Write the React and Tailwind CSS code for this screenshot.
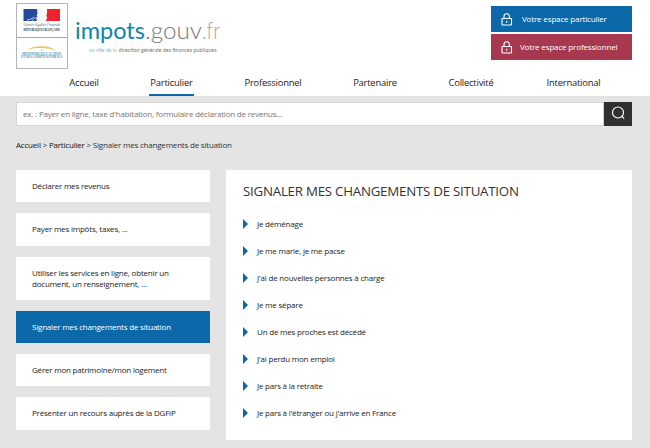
const nav = [
  { label: 'Accueil', place: 'ml-[69px] w-[30px]' },
  { label: 'Particulier', place: 'ml-[50px] w-[45px]', active: true },
  { label: 'Professionnel', place: 'ml-[50px] w-[58px]' },
  { label: 'Partenaire', place: 'ml-[51px] w-[44px]' },
  { label: 'Collectivité', place: 'ml-[51px] w-[46px]' },
  { label: 'International', place: 'ml-[52px] w-[55px]' },
];

const sections = [
  { label: 'Déclarer mes revenus', size: 'h-[32px]' },
  { label: 'Payer mes impôts, taxes, ...', size: 'h-[33px]' },
  { label: 'Utiliser les services en ligne, obtenir un document, un renseignement, ...', size: 'h-[43px]' },
  { label: 'Signaler mes changements de situation', size: 'h-[32px]', active: true },
  { label: 'Gérer mon patrimoine/mon logement', size: 'h-[32px]' },
  { label: 'Présenter un recours auprès de la DGFiP', size: 'h-[33px]' },
];

const links = [
  'Je déménage',
  'Je me marie, je me pacse',
  "J'ai de nouvelles personnes à charge",
  'Je me sépare',
  'Un de mes proches est décédé',
  "J'ai perdu mon emploi",
  'Je pars à la retraite',
  "Je pars à l'étranger ou j'arrive en France",
];

function Lock() {
  return (
    <svg className="ml-[10px] h-[13px] w-[12px] shrink-0" viewBox="0 0 12 13" fill="none" stroke="#fff">
      <rect x="1" y="5.5" width="9.500" height="6.500" rx="0.5" strokeWidth="1.100" />
      <path d="M3 5.500V3.500a2.700 2.700 0 0 1 5.400 0v2M5.700 7.800v2" strokeWidth="1.100" />
    </svg>
  );
}

function Emblem() {
  return (
    <svg className="h-[67px] w-[52px] overflow-visible" viewBox="0 0 52 67">
      <rect x="0.5" y="0.5" width="51" height="65" fill="#fff" stroke="#b5b5b5" />
      <path d="M0 34.500h52" stroke="#aaa" />
      <path d="M7.500 6h13c2 1 3 2.500 2.600 4.500l1 2.500-1.200.7c.2 2-1.200 2.100-2.400 2.100l.3 2.200H7.500z" fill="#254a9b" />
      <path d="M31 6h13v12H29.500c2-2 1.800-4 .8-5.500.8-2 1-4 .7-6.500z" fill="#ed2430" />
      <path d="M21 6.300c3-1 6 .2 7.300 2.200 1 2.200.2 3.500 1 5-1 1.500.3 3.200-1.500 4.500h-5.200c-1.200-.8-2.200-1.700-2.300-3.200l1.200-.8-.8-1.500c1-2 .7-4.200.3-6.200z" fill="#f3f6fb" />
      <path d="M16 18c1-2 3-3.500 5.500-3.500M11 17c3-.2 5-1.500 7-3" fill="none" stroke="#dbe4f4" strokeWidth=".8" />
      <text x="7.500" y="22.900" textLength="36.500" lengthAdjust="spacingAndGlyphs" fontSize="3" fontStyle="italic" fontFamily="Liberation Serif, serif" fill="#777">Liberté • Égalité • Fraternité</text>
      <text x="7.500" y="27.700" textLength="36.500" lengthAdjust="spacingAndGlyphs" fontSize="3.300" fontWeight="bold" fontFamily="Liberation Serif, serif" fill="#444">RÉPUBLIQUE FRANÇAISE</text>
      <path d="M11 47c6-4.800 23-5.200 29.500.8C34 44.600 18 44 11 47z" fill="#ecc45c" />
      <path d="M25 46.500h1.500v1H25z" fill="#d9a94c" />
      <text x="6" y="51.800" textLength="39" lengthAdjust="spacingAndGlyphs" fontSize="3" fontWeight="bold" fontFamily="Liberation Serif, serif" fill="#5a9db8">MINISTÈRE DE L’ACTION</text>
      <text x="5" y="55" textLength="41" lengthAdjust="spacingAndGlyphs" fontSize="3" fontWeight="bold" fontFamily="Liberation Serif, serif" fill="#5a9db8">ET DES COMPTES PUBLICS</text>
    </svg>
  );
}

function Wordmark() {
  return (
    <svg className="mt-[12px] ml-[7px] h-[44px] w-[150px] overflow-visible" viewBox="0 0 150 44" fontFamily="Lato, sans-serif">
      <text x="0" y="27" fontSize="24" textLength="70" lengthAdjust="spacingAndGlyphs" fill="#0b86ad">impots</text>
      <text x="70" y="27" fontSize="24" fontWeight="300" textLength="57" lengthAdjust="spacingAndGlyphs" fill="#777">.gouv</text>
      <text x="127" y="27" fontSize="24" fontWeight="300" textLength="18" lengthAdjust="spacingAndGlyphs" fill="#a5a5a5">.fr</text>
      <text x="14" y="39.500" fontSize="5.700" textLength="27.500" lengthAdjust="spacingAndGlyphs" fill="#83b9d2">un site de la</text>
      <text x="43.500" y="39.500" fontSize="5.700" textLength="98" lengthAdjust="spacingAndGlyphs" fill="#777">direction générale des finances publiques</text>
    </svg>
  );
}

export default function App() {
  return (
    <div className="h-[448px] w-[650px] overflow-hidden bg-[#e4e4e4] font-['Open_Sans','Noto_Sans',sans-serif] text-[8px] tracking-[-0.2px] text-[#222]">
      <header className="h-[96px] bg-white">
        <div className="flex h-[72px] items-start pl-4">
          <div className="mt-[3px]"><Emblem /></div>
          <div className="tracking-normal"><Wordmark /></div>
          <div className="mt-[6px] mr-[18px] ml-auto flex w-[141px] flex-col gap-[2px] tracking-[-0.15px] text-white">
            <a className="flex h-[26px] items-center bg-[#0b69a9]">
              <Lock />
              <span className="ml-[9px] whitespace-nowrap">Votre espace particulier</span>
            </a>
            <a className="flex h-[26px] items-center bg-[#a63950]">
              <Lock />
              <span className="ml-[7px] whitespace-nowrap">Votre espace professionnel</span>
            </a>
          </div>
        </div>
        <nav className="flex h-[24px] text-[9.4px]">
          {nav.map((n) => (
            <a
              key={n.label}
              className={`flex h-full justify-center border-b-2 pt-[4px] leading-[13px] whitespace-nowrap ${n.place} ${n.active ? 'border-[#0b69a9]' : 'border-transparent'}`}
            >
              {n.label}
            </a>
          ))}
        </nav>
      </header>

      <div className="mt-[6px] ml-4 flex h-[24px] w-[616px]">
        <div className="flex flex-1 items-center border border-[#d5d5d5] bg-white pl-[6px] tracking-[-0.19px] text-[#757575]">
          ex. : Payer en ligne, taxe d'habitation, formulaire déclaration de revenus...
        </div>
        <button className="flex w-[28px] items-center justify-center bg-[#303030]">
          <svg className="-mt-[2px] h-[14px] w-[14px]" viewBox="0 0 14 14" fill="none" stroke="#fff" strokeWidth="1.200">
            <circle cx="7" cy="6.500" r="5.500" />
            <path d="m10.500 10 2.700 2.700" />
          </svg>
        </button>
      </div>

      <div className="mt-[13px] ml-4 h-[12px] leading-[12px] whitespace-nowrap text-[#333]">
        <span className="text-[#111]">Accueil</span> &gt; <span className="text-[#111]">Particulier</span> &gt; Signaler mes changements de situation
      </div>

      <div className="mt-[19px] ml-4 flex items-start gap-4">
        <aside className="flex w-[194px] flex-col gap-[11px]">
          {sections.map((s) => (
            <a
              key={s.label}
              className={`flex items-center pr-[30px] pb-[2px] pl-4 leading-[11px] ${s.size} ${s.active ? 'bg-[#0b69a9] text-white' : 'bg-white'}`}
            >
              {s.label}
            </a>
          ))}
        </aside>
        <main className="h-[270px] w-[406px] bg-white pl-[17px]">
          <h1 className="pt-[12px] text-[13.3px] leading-[18px] tracking-[-0.24px] text-[#333]">SIGNALER MES CHANGEMENTS DE SITUATION</h1>
          <ul className="mt-[10px]">
            {links.map((l) => (
              <li key={l} className="flex h-[27px] items-center">
                <svg className="mr-[9px] h-[10px] w-[5px]" viewBox="0 0 5 10">
                  <path d="M0 0l5 5-5 5z" fill="#0b69a9" />
                </svg>
                <span>{l}</span>
              </li>
            ))}
          </ul>
        </main>
      </div>
    </div>
  );
}
